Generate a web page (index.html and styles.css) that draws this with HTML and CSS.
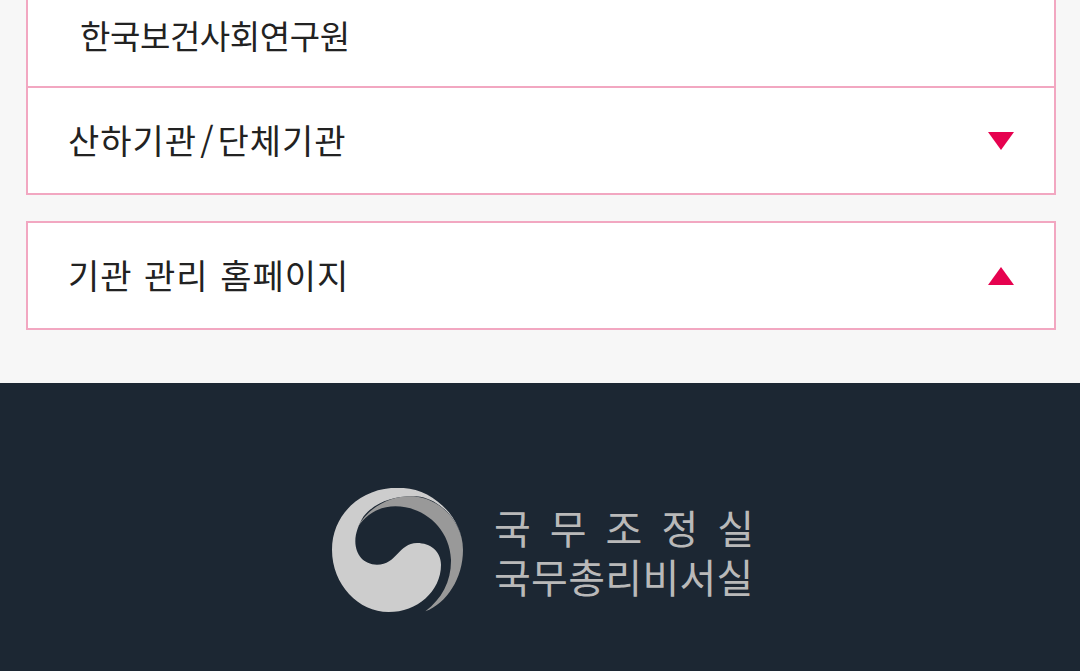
FILE: index.html
```html
<!DOCTYPE html>
<html lang="ko">
<head>
<meta charset="utf-8">
<title>국무조정실 국무총리비서실</title>
<link rel="stylesheet" href="styles.css">
</head>
<body>
<main class="content">
  <section class="box box-first">
    <div class="row row-sub"><span class="label-sub">한국보건사회연구원</span></div>
    <div class="row row-main">
      <span class="label">산하기관<span class="slash">/</span>단체기관</span>
      <span class="tri tri-down"></span>
    </div>
  </section>
  <section class="box box-second">
    <div class="row row-main">
      <span class="label">기관 관리 홈페이지</span>
      <span class="tri tri-up"></span>
    </div>
  </section>
</main>
<footer class="footer">
  <div class="brand">
    <svg class="emblem" viewBox="35 40 393 372" aria-hidden="true">
      <path class="emblem-light" d="M250 40C130 30 35 115 35 225C35 330 115 412 205 412C290 412 362 350 362 270C362 230 330 205 290 205C235 205 230 270 170 270C130 270 105 240 105 200C105 175 115 150 130 125C170 75 240 60 300 66C370 80 428 150 428 225C428 130 340 45 250 40Z"/>
      <path class="emblem-gray" d="M110 160C150 85 230 58 290 66C370 78 428 150 428 225C428 310 380 385 315 410C365 372 393 320 392 255C388 160 310 95 225 95C180 95 140 115 110 160Z"/>
    </svg>
    <div class="brand-text">
      <div class="brand-top"><span>국</span><span>무</span><span>조</span><span>정</span><span>실</span></div>
      <div class="brand-bottom">국무총리비서실</div>
    </div>
  </div>
</footer>
</body>
</html>
```

FILE: styles.css
```css
html, body {
  margin: 0;
  padding: 0;
}
body {
  width: 1080px;
  height: 671px;
  overflow: hidden;
  background: #f7f7f7;
  font-family: "Noto Sans CJK KR", "Noto Sans", sans-serif;
}
.content {
  padding: 0 24px 53px 26px;
}
.box {
  background: #fff;
  border: 2px solid #f2a7c1;
}
.box-first {
  border-top: 0;
}
.box-second {
  margin-top: 26px;
}
.row {
  display: flex;
  align-items: center;
  justify-content: space-between;
  box-sizing: border-box;
}
.row-sub {
  height: 88px;
  padding: 0 0 16px 52px;
  border-bottom: 2px solid #f2a7c1;
}
.row-main {
  height: 105px;
  padding: 0 40px;
}
.label-sub {
  font-size: 33px;
  line-height: 44px;
  letter-spacing: -0.4px;
  color: #222;
}
.label {
  font-size: 34px;
  line-height: 44px;
  letter-spacing: 1px;
  word-spacing: 1px;
  margin-bottom: 2px;
  color: #222;
}
.slash {
  margin: 0 3px;
}
.tri {
  width: 0;
  height: 0;
  border-left: 13px solid transparent;
  border-right: 13px solid transparent;
}
.tri-down {
  border-top: 18px solid #e6024f;
}
.tri-up {
  border-bottom: 18px solid #e6024f;
}
.footer {
  height: 288px;
  background: #1c2733;
  display: flex;
  justify-content: center;
  align-items: flex-start;
  padding: 105px 0 0 6px;
  box-sizing: border-box;
}
.brand {
  display: flex;
  align-items: center;
  gap: 31px;
}
.emblem {
  width: 131px;
  height: 124px;
  display: block;
}
.emblem-light {
  fill: #cdcdcd;
}
.emblem-gray {
  fill: #999;
}
.brand-text {
  width: 260px;
  padding-top: 4px;
  color: #b9b9b9;
  font-size: 40px;
  font-weight: 400;
  line-height: 49px;
}
.brand-top {
  display: flex;
  justify-content: space-between;
}
.brand-bottom {
  white-space: nowrap;
  letter-spacing: 0.3px;
}
```
